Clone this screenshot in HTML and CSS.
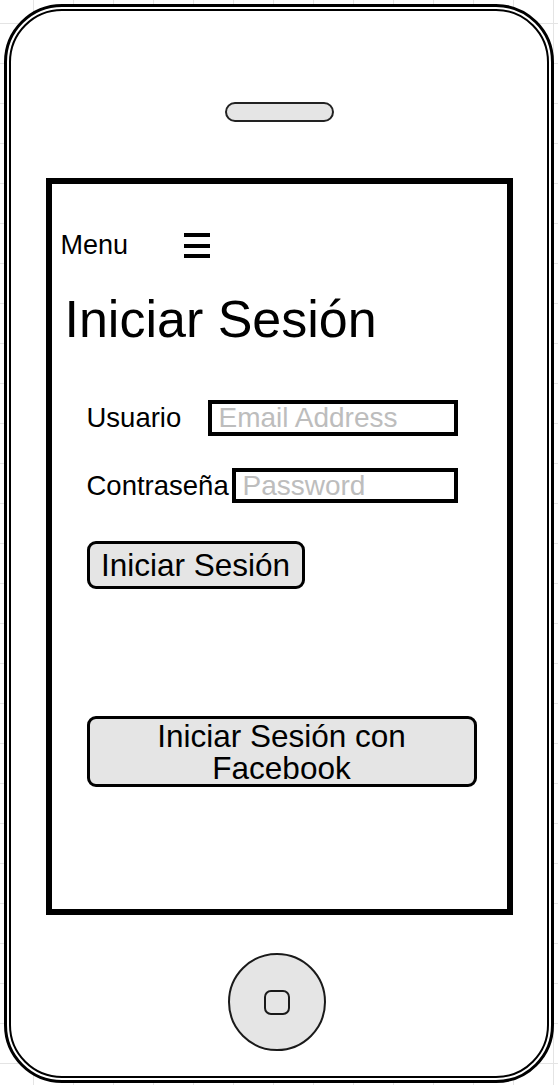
FILE: index.html
```html
<!DOCTYPE html>
<html lang="es">
<head>
    <meta charset="UTF-8">
    <meta name="viewport" content="width=device-width, initial-scale=1.0">
    <title>Iniciar Sesión</title>
    <link rel="stylesheet" href="styles.css">
</head>
<body>
    <div class="phone">
        <div class="phone-inner">
            <div class="speaker"></div>

            <div class="screen">
                <div class="menu-bar">
                    <span class="menu-label">Menu</span>
                    <svg class="menu-icon" width="26" height="25" viewBox="0 0 26 25">
                        <rect x="0" y="0" width="26" height="4" fill="#000"/>
                        <rect x="0" y="11" width="26" height="4" fill="#000"/>
                        <rect x="0" y="21" width="26" height="4" fill="#000"/>
                    </svg>
                </div>

                <h1 class="title">Iniciar Sesión</h1>

                <form name="form1" class="login-form" method="get" action="">
                    <div class="field-row">
                        <label for="txt_user">Usuario</label>
                        <input type="text" class="field field-user" name="txt_user" id="txt_user" placeholder="Email Address">
                    </div>
                    <div class="field-row row-pwd">
                        <label for="txt_pwd">Contraseña</label>
                        <input type="password" class="field field-pwd" name="txt_pwd" id="txt_pwd" placeholder="Password">
                    </div>
                    <button type="button" class="btn btn-login">Iniciar Sesión</button>
                    <button type="button" class="btn btn-facebook">Iniciar Sesión con Facebook</button>
                </form>
            </div>

            <div class="home-button"><span class="home-square"></span></div>
        </div>
    </div>
</body>
</html>
```

FILE: styles.css
```css
body
{
    margin: 0;
    font-family: "Liberation Sans", Arial, Helvetica, sans-serif;
    color: #000;
    background-color: #fff;
    background-image:
        linear-gradient(to right, #e4e4e4 1px, transparent 1px),
        linear-gradient(to bottom, #e4e4e4 1px, transparent 1px);
    background-size: 40px 40px;
    background-position: 33px 23px;
}
.phone
{
    box-sizing: border-box;
    width: 550px;
    height: 1079px;
    margin: 4px;
    border: 3px solid #000;
    border-radius: 58px;
    padding: 2px;
    background-color: #fff;
}
.phone-inner
{
    box-sizing: border-box;
    height: 100%;
    border: 2px solid #000;
    border-radius: 53px;
    display: flex;
    flex-direction: column;
    align-items: center;
}
.speaker
{
    box-sizing: border-box;
    width: 109px;
    height: 20px;
    margin-top: 91px;
    border: 2px solid #222;
    border-radius: 10px;
    background-color: #e5e5e5;
}
.screen
{
    box-sizing: border-box;
    width: 467px;
    height: 737px;
    margin-top: 56px;
    border: 6px solid #000;
    padding: 45px 0 0 7px;
}
.menu-bar
{
    display: flex;
    align-items: center;
    margin-left: 2px;
    font-size: 27px;
    line-height: 32px;
}
.menu-icon
{
    display: block;
    margin-left: 56px;
}
.title
{
    margin: 28px 0 0 6px;
    font-size: 52px;
    line-height: 60px;
    font-weight: normal;
}
.login-form
{
    margin: 51px 0 0 26px;
}
.field-row
{
    width: 373px;
    display: flex;
    justify-content: space-between;
    align-items: center;
    height: 36px;
}
.row-pwd
{
    margin-top: 32px;
    height: 35px;
}
.field-row label
{
    margin-left: 2px;
    font-size: 27.5px;
    line-height: 32px;
}
.field
{
    box-sizing: border-box;
    height: 100%;
    border: 4px solid #000;
    border-radius: 0;
    padding: 0 5px 0 7px;
    font-family: inherit;
    font-size: 28px;
    color: #000;
    background: #fff;
    outline: none;
}
.field::placeholder
{
    color: #bdbdbd;
    opacity: 1;
}
.field-user
{
    width: 250px;
}
.field-pwd
{
    width: 226px;
}
.btn
{
    display: block;
    box-sizing: border-box;
    margin-left: 2px;
    border: 3px solid #000;
    border-radius: 9px;
    background-color: #e5e5e5;
    padding: 0;
    font-family: inherit;
    font-size: 31.5px;
    color: #000;
    text-align: center;
}
.btn-login
{
    width: 218px;
    height: 48px;
    margin-top: 38px;
    line-height: 40px;
}
.btn-facebook
{
    width: 390px;
    height: 71px;
    margin-top: 127px;
    line-height: 32px;
}
.home-button
{
    box-sizing: border-box;
    width: 98px;
    height: 98px;
    margin: 38px 5px 0 0;
    border: 2px solid #1a1a1a;
    border-radius: 50%;
    background-color: #e5e5e5;
    display: flex;
    justify-content: center;
    align-items: center;
}
.home-square
{
    box-sizing: border-box;
    width: 26px;
    height: 25px;
    border: 2px solid #1a1a1a;
    border-radius: 7px;
}
```
